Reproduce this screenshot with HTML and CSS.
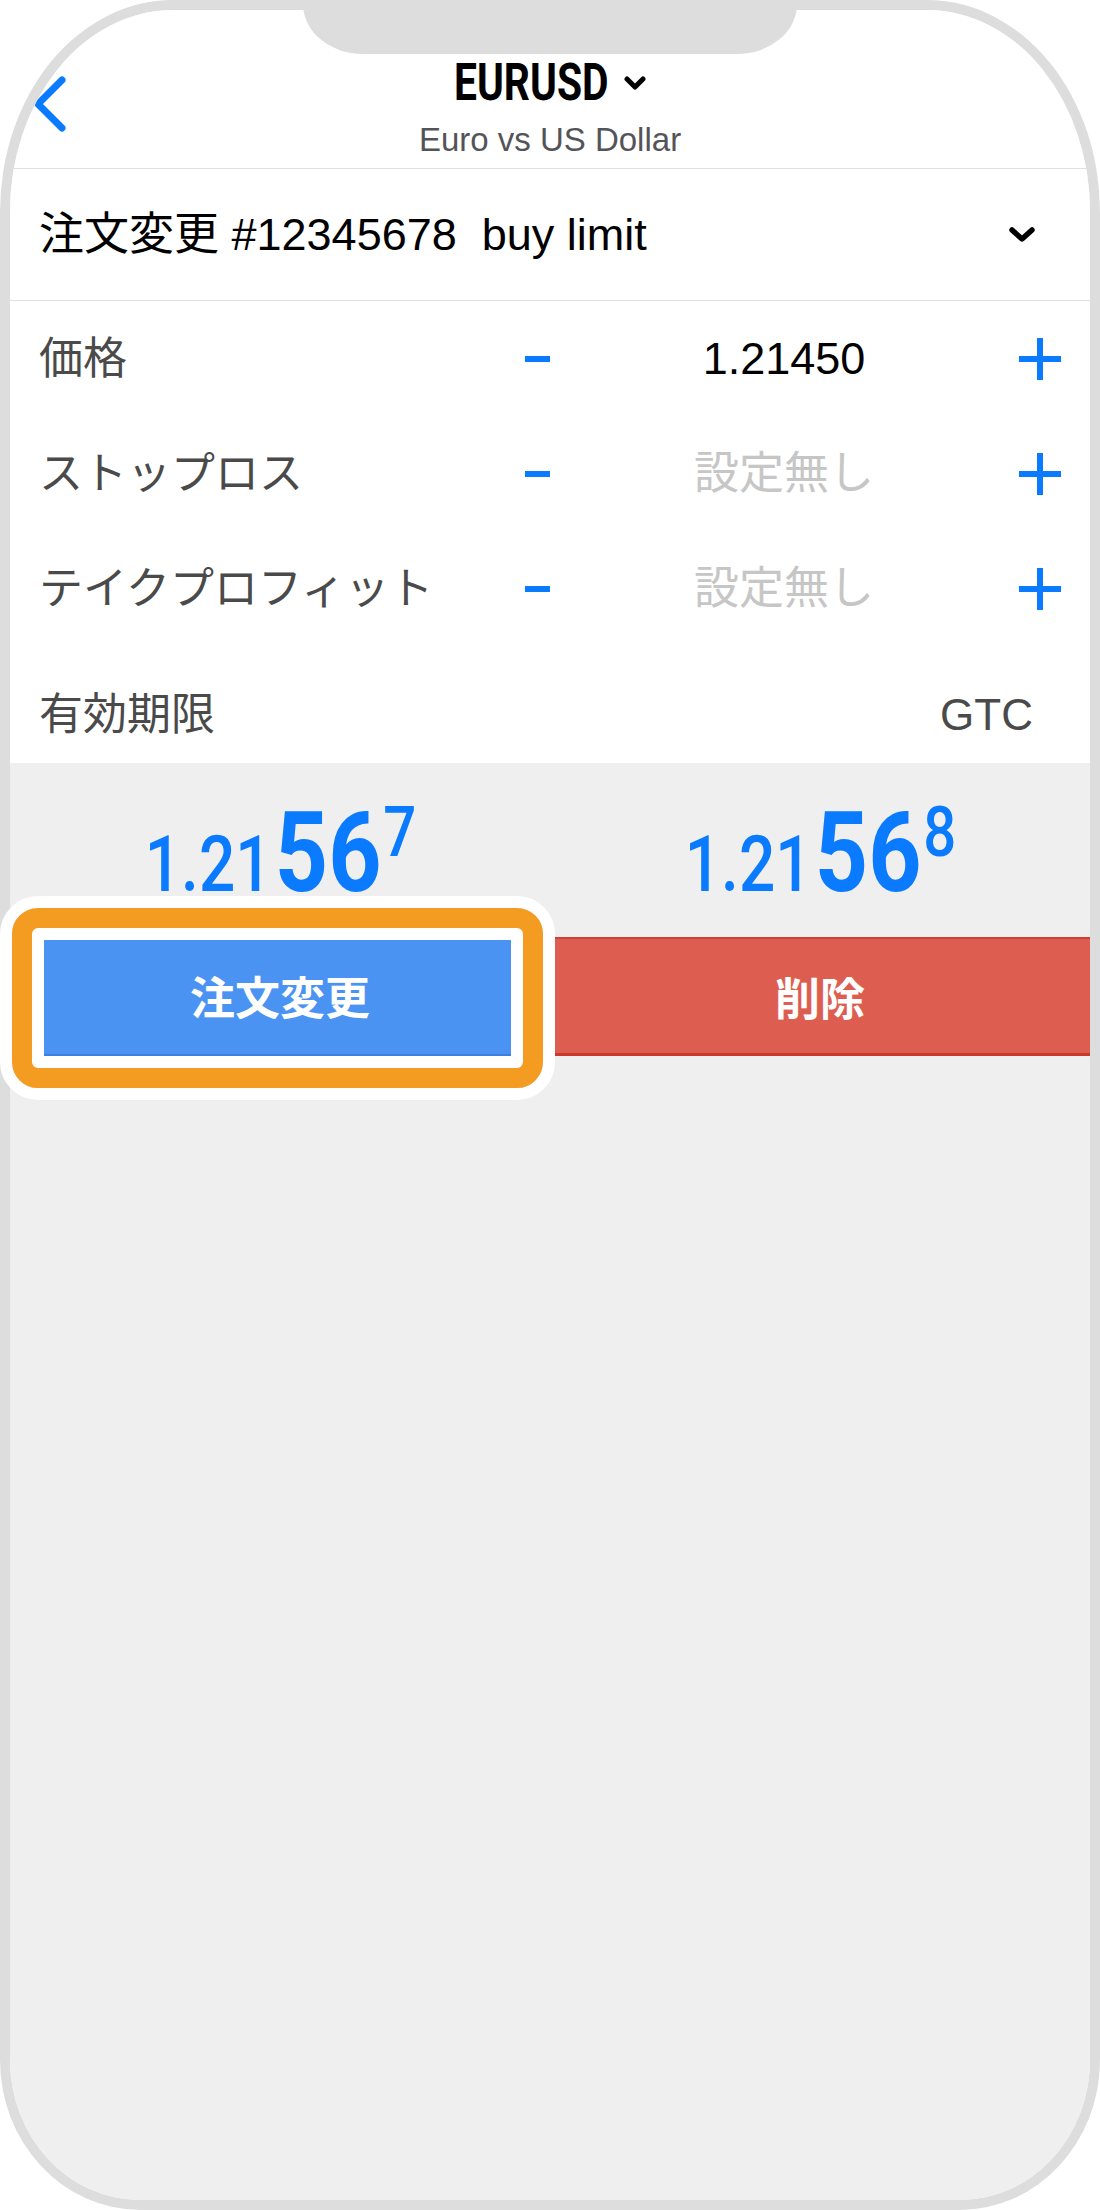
FILE: index.html
```html
<!DOCTYPE html>
<html lang="ja">
<head>
    <meta charset="UTF-8">
    <meta name="viewport" content="width=device-width, initial-scale=1.0">
    <title>EURUSD 注文変更</title>
    <link rel="stylesheet" href="styles.css">
</head>
<body>
    <div class="phone">
        <div class="screen">
            <header class="topbar">
                <svg class="back" viewBox="0 0 32 56" width="32" height="56">
                    <polyline points="28,4 4,28 28,52" />
                </svg>
                <div class="title">
                    <div class="symbol">
                        <span class="symbol-name">EURUSD</span>
                        <svg class="caret" viewBox="0 0 22 15" width="22" height="15">
                            <polyline points="3,3 11,11 19,3" />
                        </svg>
                    </div>
                    <div class="desc">Euro vs US Dollar</div>
                </div>
            </header>

            <div class="order-row">
                <span>注文変更 #12345678&nbsp; buy limit</span>
                <svg class="caret caret-lg" viewBox="0 0 26 16" width="26" height="16">
                    <polyline points="3,3 13,12 23,3" />
                </svg>
            </div>

            <div class="form">
                <div class="field">
                    <span class="label">価格</span>
                    <span class="minus"></span>
                    <span class="value">1.21450</span>
                    <svg class="plus" viewBox="0 0 42 42" width="42" height="42">
                        <path d="M21 0V42M0 21H42" />
                    </svg>
                </div>
                <div class="field">
                    <span class="label">ストップロス</span>
                    <span class="minus"></span>
                    <span class="value empty">設定無し</span>
                    <svg class="plus" viewBox="0 0 42 42" width="42" height="42">
                        <path d="M21 0V42M0 21H42" />
                    </svg>
                </div>
                <div class="field">
                    <span class="label">テイクプロフィット</span>
                    <span class="minus"></span>
                    <span class="value empty">設定無し</span>
                    <svg class="plus" viewBox="0 0 42 42" width="42" height="42">
                        <path d="M21 0V42M0 21H42" />
                    </svg>
                </div>
                <div class="field expiry">
                    <span class="label">有効期限</span>
                    <span class="gtc">GTC</span>
                </div>
            </div>

            <div class="market">
                <div class="quotes">
                    <div class="quote">
                        <div class="price"><span class="p-small">1.21</span><span class="p-big">56</span><span class="p-sup">7</span></div>
                    </div>
                    <div class="quote">
                        <div class="price"><span class="p-small">1.21</span><span class="p-big">56</span><span class="p-sup">8</span></div>
                    </div>
                </div>
                <div class="actions">
                    <button class="btn btn-modify">注文変更</button>
                    <button class="btn btn-delete">削除</button>
                </div>
            </div>
        </div>

        <div class="notch"></div>
        <div class="highlight"><div class="highlight-ring"></div></div>
    </div>
</body>
</html>
```

FILE: styles.css
```css
body {
    margin: 0;
    background-color: #fff;
    font-family: "Liberation Sans", "Noto Sans CJK JP", sans-serif;
}
.phone {
    position: relative;
    width: 1100px;
    height: 2210px;
    box-sizing: border-box;
    border: 10px solid #dddddd;
    border-radius: 173px 173px 140px 140px / 212px 212px 150px 150px;
}
.screen {
    height: 100%;
    overflow: hidden;
    background-color: #efefef;
    border-radius: 163px 163px 130px 130px / 202px 202px 140px 140px;
}
.notch {
    position: absolute;
    left: 293px;
    top: -10px;
    width: 494px;
    height: 54px;
    background-color: #dddddd;
    border-radius: 0 0 60px 60px / 0 0 50px 50px;
}

/* header */
.topbar {
    display: grid;
    grid-template-columns: 90px 1fr 90px;
    height: 159px;
    box-sizing: border-box;
    background-color: #fff;
    border-bottom: 1px solid #e0e0e0;
}
.back {
    margin: 66px 0 0 24px;
    fill: none;
    stroke: #0a7aff;
    stroke-width: 7;
    stroke-linecap: round;
    stroke-linejoin: round;
}
.title {
    padding-top: 48px;
    text-align: center;
}
.symbol {
    display: flex;
    justify-content: center;
    align-items: center;
    height: 50px;
}
.symbol-name {
    display: inline-block;
    font-family: Roboto, sans-serif;
    font-weight: 700;
    font-size: 51px;
    line-height: 50px;
    color: #000;
    transform: scaleX(0.8);
    transform-origin: left center;
    margin-right: -38px;
}
.caret {
    fill: none;
    stroke: #000;
    stroke-width: 5;
    stroke-linecap: round;
    stroke-linejoin: round;
}
.symbol .caret {
    margin-left: 15px;
}
.desc {
    margin-top: 12px;
    font-size: 33px;
    line-height: 40px;
    color: #545458;
}

/* order selector */
.order-row {
    display: flex;
    justify-content: space-between;
    align-items: center;
    height: 132px;
    box-sizing: border-box;
    padding: 0 55px 0 29px;
    background-color: #fff;
    border-bottom: 1px solid #e0e0e0;
    font-size: 45px;
    line-height: 56px;
    color: #000;
}
.caret-lg {
    stroke-width: 5.5;
}

/* form */
.form {
    background-color: #fff;
}
.field {
    display: grid;
    grid-template-columns: 1fr 50px 457px 42px;
    align-items: center;
    height: 115px;
    padding: 0 29px;
    font-size: 44px;
    line-height: 56px;
}
.label {
    color: #4a4a4a;
}
.minus {
    justify-self: center;
    width: 25px;
    height: 6px;
    background-color: #0a7aff;
}
.value {
    padding-right: 13px;
    text-align: center;
    font-size: 45px;
    color: #000;
}
.value.empty {
    color: #c6c6c6;
}
.plus {
    stroke: #0a7aff;
    stroke-width: 6;
}
.expiry {
    display: flex;
    justify-content: space-between;
    height: 117px;
    box-sizing: border-box;
    padding: 21px 57px 0 29px;
}
.gtc {
    color: #4a4a4a;
}

/* quotes + buttons */
.quotes {
    display: flex;
    height: 174px;
    box-sizing: border-box;
    padding-top: 34px;
}
.quote {
    flex: 1;
    display: flex;
    justify-content: center;
    align-items: flex-start;
}
.price {
    display: flex;
    align-items: baseline;
    font-family: Roboto, sans-serif;
    font-weight: 500;
    color: #0a7aff;
    line-height: 1;
    transform: scaleX(0.83);
}
.p-small {
    font-size: 77px;
}
.p-big {
    font-size: 112px;
    font-weight: 700;
    margin-left: 4px;
}
.p-sup {
    align-self: flex-start;
    font-size: 70px;
    margin-left: 2px;
}
.actions {
    display: flex;
}
.btn {
    flex: 1;
    height: 119px;
    margin: 0;
    padding: 0;
    border: none;
    font-family: "Liberation Sans", "Noto Sans CJK JP", sans-serif;
    font-size: 45px;
    font-weight: bold;
    color: #fff;
}
.btn-modify {
    background-color: #4a93f3;
    border-bottom: 2px solid #3d7fdc;
}
.btn-delete {
    background-color: #dd5e50;
    border-top: 2px solid #cc4336;
    border-bottom: 3px solid #c9392c;
}

/* annotation frame over the modify button */
.highlight {
    position: absolute;
    left: -10px;
    top: 886px;
    width: 555px;
    height: 204px;
    box-sizing: border-box;
    border: 12px solid #fff;
    border-radius: 38px;
}
.highlight-ring {
    height: 100%;
    box-sizing: border-box;
    border: 20px solid #f49c22;
    border-radius: 26px;
    box-shadow: inset 0 0 0 12px #fff;
}
```
